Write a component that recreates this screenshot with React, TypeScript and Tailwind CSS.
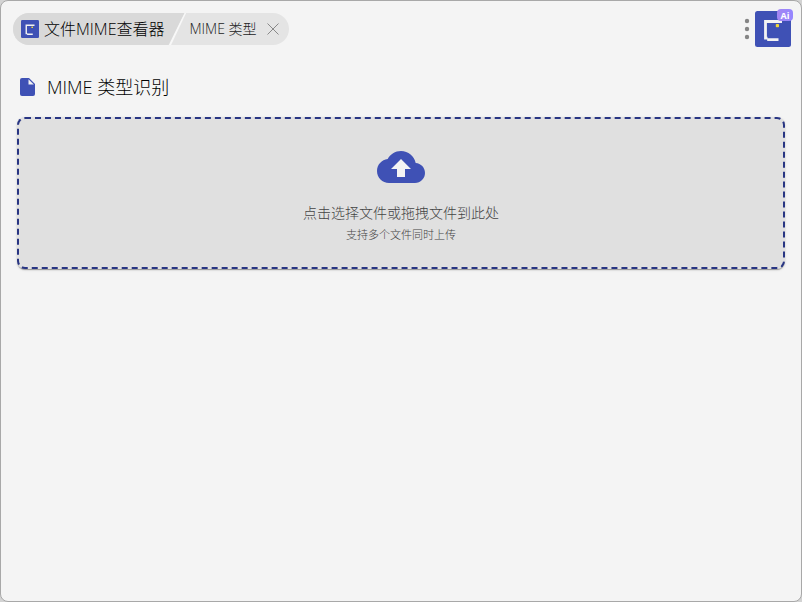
import { useRef, useState } from "react"

const fontClass =
  "font-['Open_Sans','Noto_Sans_CJK_SC',sans-serif] font-light"

function BracketLogo({ className }: { className: string }) {
  return (
    <svg viewBox="0 0 36 36" className={className} aria-hidden="true">
      <rect width="36" height="36" rx="2.5" fill="#3f51b5" />
      <path
        d="M27 10.5H10.5V27.2H12.5M12.2 28.6H23.5"
        fill="none"
        stroke="#f3f3f3"
        strokeWidth="2.8"
      />
      <rect x="20.8" y="13" width="3.2" height="3.2" rx="0.8" fill="#f0d838" />
    </svg>
  )
}

function CloseIcon() {
  return (
    <svg viewBox="0 0 12 12" className="size-3" aria-hidden="true">
      <path d="M0.5 0.5L11.5 11.5M11.5 0.5L0.5 11.5" stroke="#888888" />
    </svg>
  )
}

function FileIcon() {
  return (
    <svg viewBox="0 0 15 18" className="h-[18px] w-[15px]" aria-hidden="true">
      <path
        d="M2 0H9L15 6V16Q15 18 13 18H2Q0 18 0 16V2Q0 0 2 0Z"
        fill="#3f51b5"
      />
      <path d="M8.5 1.2V6.5H13.8Z" fill="#f4f4f4" />
    </svg>
  )
}

function CloudUploadIcon() {
  return (
    <svg viewBox="0 0 24 24" className="size-12" aria-hidden="true">
      <path
        d="M19.35 10.04C18.67 6.59 15.64 4 12 4 9.11 4 6.6 5.64 5.35 8.04 2.34 8.36 0 10.91 0 14c0 3.31 2.69 6 6 6h13c2.76 0 5-2.24 5-5 0-2.64-2.05-4.78-4.65-4.96z"
        fill="#3f51b5"
      />
      <path d="M14 13v4h-4v-4H7l5-5 5 5h-3z" fill="#f4f4f4" />
    </svg>
  )
}

function TitleBar({
  tabOpen,
  onClose,
}: {
  tabOpen: boolean
  onClose: () => void
}) {
  return (
    <header className="flex items-start justify-between pt-[10px] pr-[10px] pl-3">
      <nav className="mt-[2px] flex h-8 items-center overflow-hidden rounded-full bg-[#e4e4e4]">
        <a
          href="#home"
          className="flex h-8 items-center gap-[5px] bg-[#d9d9d9] pr-5 pl-2 text-base text-black [clip-path:polygon(0_0,100%_0,calc(100%-16px)_100%,0_100%)]"
        >
          <BracketLogo className="size-[18px]" />
          文件MIME查看器
        </a>
        {tabOpen ? (
          <>
            <svg viewBox="0 0 18 32" className="-ml-4 h-8 w-[18px]" aria-hidden="true">
              <path d="M16.5 -1L0.5 33" stroke="#f8f8f8" strokeWidth="2" />
            </svg>
            <span className="pl-[3px] text-sm text-[#222222]">MIME 类型</span>
            <button
              type="button"
              aria-label="关闭"
              className="flex h-8 items-center px-[10px]"
              onClick={onClose}
            >
              <CloseIcon />
            </button>
          </>
        ) : null}
      </nav>

      <div className="flex items-center gap-[5px]">
        <button type="button" aria-label="菜单">
          <svg viewBox="0 0 6 22" className="h-[22px] w-[6px]" aria-hidden="true">
            <circle cx="3" cy="3" r="2.2" fill="#858585" />
            <circle cx="3" cy="11" r="2.2" fill="#858585" />
            <circle cx="3" cy="19" r="2.2" fill="#858585" />
          </svg>
        </button>
        <button type="button" aria-label="助手" className="relative">
          <BracketLogo className="size-9" />
          <span className="absolute -top-[2px] -right-[2px] flex h-3 w-4 items-center justify-center rounded bg-linear-to-r from-[#a486f2] to-[#9586ff] text-[9px] leading-none font-bold text-white">
            Ai
          </span>
        </button>
      </div>
    </header>
  )
}

export default function App() {
  const [tabOpen, setTabOpen] = useState(true)
  const inputRef = useRef<HTMLInputElement>(null)

  return (
    <div className="min-h-screen bg-[#d3d3d3]">
      <div
        className={`min-h-screen rounded-lg border border-[#a8a8a8] bg-[#f4f4f4] ${fontClass}`}
      >
        <TitleBar tabOpen={tabOpen} onClose={() => setTabOpen(false)} />

        <main className="px-4 pt-7">
          <h1 className="flex h-6 items-center gap-3 pl-[3px] text-lg text-black">
            <FileIcon />
            MIME 类型识别
          </h1>

          <button
            type="button"
            className="mt-[18px] flex w-full flex-col items-center rounded-lg border-2 border-dashed border-[#283583] bg-[#e0e0e0] pt-6 pb-6 text-[#444444] shadow-[0_2px_1px_-1px_rgba(0,0,0,0.2),0_1px_1px_rgba(0,0,0,0.14),0_1px_3px_rgba(0,0,0,0.12)]"
            onClick={() => inputRef.current?.click()}
          >
            <CloudUploadIcon />
            <span className="mt-3 text-sm leading-5">
              点击选择文件或拖拽文件到此处
            </span>
            <span className="mt-1 text-[11px] leading-4">
              支持多个文件同时上传
            </span>
          </button>
          <input
            ref={inputRef}
            type="file"
            multiple
            aria-label="选择文件"
            className="hidden"
          />
        </main>
      </div>
    </div>
  )
}
